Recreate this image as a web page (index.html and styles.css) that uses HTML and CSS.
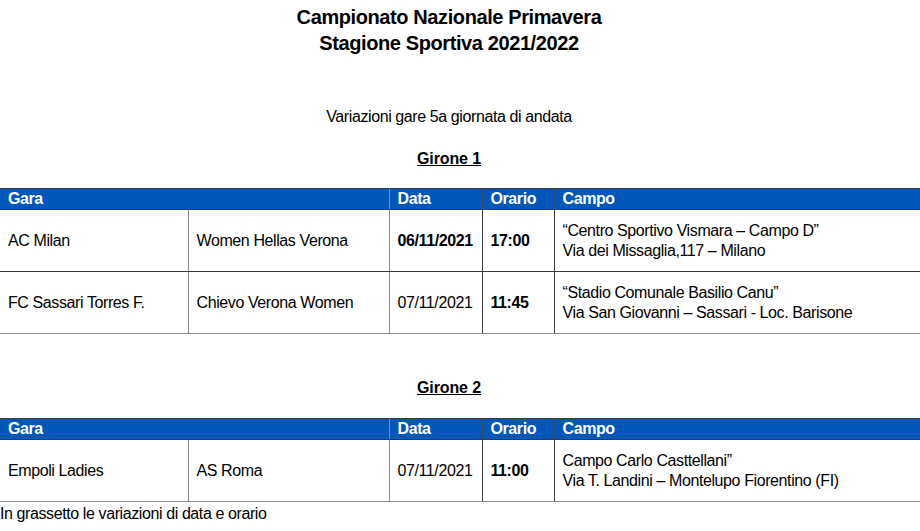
FILE: index.html
```html
<!DOCTYPE html>
<html lang="it">
<head>
<meta charset="utf-8">
<title>Campionato Nazionale Primavera</title>
<link rel="stylesheet" href="styles.css">
</head>
<body>
<header class="head">
  <h1 class="title">Campionato Nazionale Primavera<br>Stagione Sportiva 2021/2022</h1>
  <p class="sub">Variazioni gare 5a giornata di andata</p>
</header>

<h2 class="girone g1">Girone 1</h2>
<table class="tab">
  <colgroup>
    <col class="c1"><col class="c2"><col class="c3"><col class="c4"><col class="c5">
  </colgroup>
  <thead>
    <tr><th colspan="2">Gara</th><th>Data</th><th>Orario</th><th>Campo</th></tr>
  </thead>
  <tbody>
    <tr>
      <td>AC Milan</td><td>Women Hellas Verona</td><td class="b">06/11/2021</td><td class="b">17:00</td>
      <td>“Centro Sportivo Vismara – Campo D”<br>Via dei Missaglia,117 – Milano</td>
    </tr>
    <tr class="last">
      <td>FC Sassari Torres F.</td><td>Chievo Verona Women</td><td>07/11/2021</td><td class="b">11:45</td>
      <td>“Stadio Comunale Basilio Canu”<br>Via San Giovanni – Sassari - Loc. Barisone</td>
    </tr>
  </tbody>
</table>

<h2 class="girone g2">Girone 2</h2>
<table class="tab">
  <colgroup>
    <col class="c1"><col class="c2"><col class="c3"><col class="c4"><col class="c5">
  </colgroup>
  <thead>
    <tr><th colspan="2">Gara</th><th>Data</th><th>Orario</th><th>Campo</th></tr>
  </thead>
  <tbody>
    <tr class="last">
      <td>Empoli Ladies</td><td>AS Roma</td><td>07/11/2021</td><td class="b">11:00</td>
      <td>Campo Carlo Casttellani”<br>Via T. Landini – Montelupo Fiorentino (FI)</td>
    </tr>
  </tbody>
</table>
<p class="note">In grassetto le variazioni di data e orario</p>
</body>
</html>
```
FILE: styles.css
```css
html, body {
  margin: 0;
  padding: 0;
  background: #fff;
}
body {
  width: 920px;
  font-family: "Liberation Sans", Arial, sans-serif;
  color: #000;
  font-size: 16px;
  letter-spacing: -0.4px;
}
.head {
  text-align: center;
  width: 898px;
}
.title {
  margin: 0;
  padding-top: 4px;
  font-size: 20px;
  line-height: 26px;
  font-weight: bold;
  letter-spacing: -0.4px;
}
.sub {
  margin: 51px 0 0;
  font-size: 16px;
  line-height: 20px;
}
.girone {
  margin: 0;
  width: 898px;
  text-align: center;
  font-size: 16px;
  line-height: 20px;
  font-weight: bold;
  text-decoration: underline;
  letter-spacing: -0.1px;
}
.g1 { margin-top: 22px; margin-bottom: 19px; }
.g2 { margin-top: 44px; margin-bottom: 20px; }
.tab {
  width: 920px;
  border-collapse: collapse;
  table-layout: fixed;
}
.c1 { width: 188px; }
.c2 { width: 201px; }
.c3 { width: 93px; }
.c4 { width: 72px; }
.c5 { width: 366px; }
.tab th {
  background: #0057b8;
  color: #fff;
  text-align: left;
  font-weight: bold;
  font-size: 16px;
  line-height: 20px;
  height: 20px;
  padding: 0 8px;
  border-top: 1px solid #3a3a3a;
  border-bottom: 1px solid #3a3a3a;
  border-left: 1px solid #8a8a8a;
}
.tab th:first-child { border-left: none; }
.tab th:nth-child(3), .tab th:nth-child(4) { border-left-color: #3a4a6a; }
.tab td {
  height: 61px;
  padding: 0 8px;
  font-size: 16px;
  line-height: 20px;
  vertical-align: middle;
  border-bottom: 1px solid #3a3a3a;
  border-left: 1px solid #3a3a3a;
}
.tab td:first-child { border-left: none; }
.tab td:nth-child(2), .tab td:nth-child(3) { border-left-color: #8a8a8a; }
.tab tr.last td { border-bottom-color: #8a8a8a; }
.tab td.b { font-weight: bold; }
.note {
  margin: 2px 0 0;
  font-size: 16px;
  line-height: 20px;
}
```
